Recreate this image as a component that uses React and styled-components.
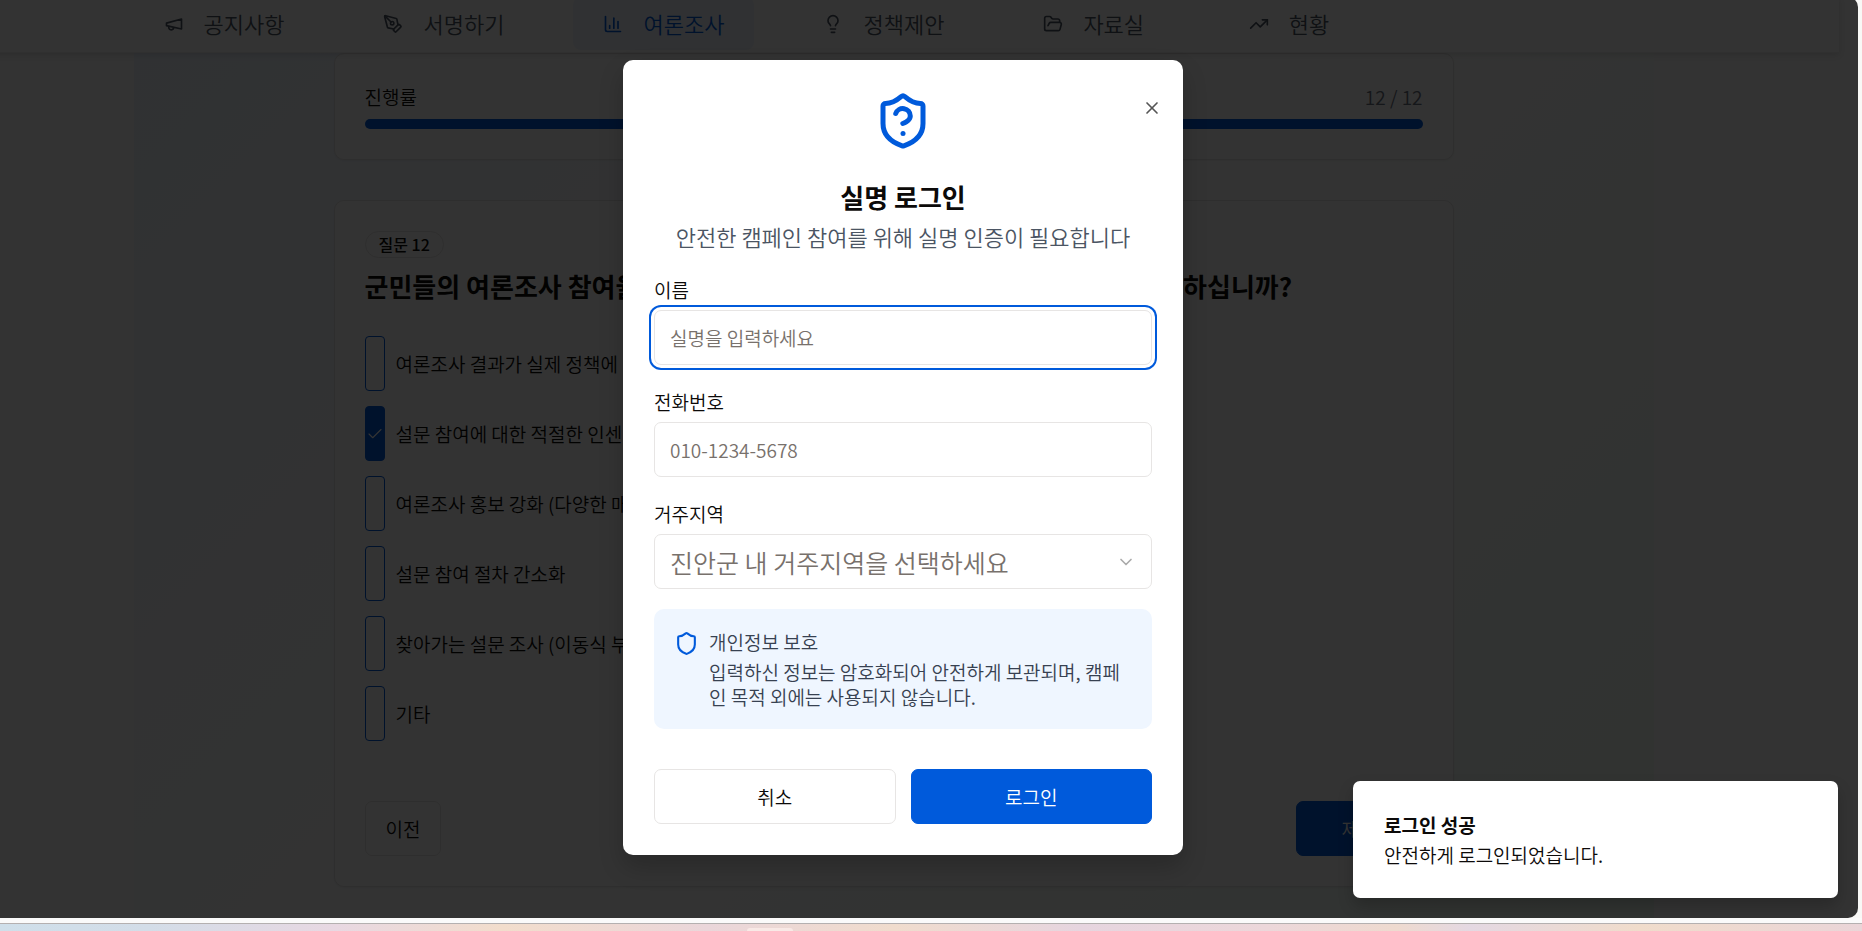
import React from "react";
import styled, { createGlobalStyle, css } from "styled-components";
import {
  PenTool, ChartColumn, Lightbulb, FolderOpen, TrendingUp,
  Check, ChevronDown, Shield, X,
} from "lucide-react";

const blue = "#005adb";
const line = "#e7e5e4";
const ink = "#0c0a09";

const Global = createGlobalStyle`
  *, *::before, *::after { box-sizing: border-box; }
  body { margin: 0; overflow: hidden; background: #fff; }
  body, button, input, select {
    font-family: "Noto Sans CJK KR", "Noto Sans", sans-serif;
    font-size: 19px;
    font-weight: 350;
    line-height: 25px;
    color: ${ink};
  }
  h1, h2, h3, p { margin: 0; }
`;

const Desktop = styled.div`
  min-height: 100vh;
  display: flex;
  flex-direction: column;
  overflow: hidden;
  background: #f8f8f6;
`;

/* The browser window reaches past the left and top edges of the view. */
const Window = styled.div`
  position: relative;
  flex: 1;
  display: flex;
  flex-direction: column;
  margin: -3px 4px 0 -52px;
  padding-right: 19px;
  overflow: hidden;
  border-radius: 10px;
  background: #fcfcfc;
`;

const Taskbar = styled.div`
  height: 13px;
  display: flex;
  justify-content: center;
  align-items: flex-end;
  padding-right: 322px;
  border-top: 5px solid #fafafa;
  background: linear-gradient(90deg, #cfdfea, #d3dde8 8%, #e8d8e2 18%, #f2ddcc 27%, #ead6da 38%, #f0dccd 48%, #e6d5df 58%, #ecd7da 68%, #eedacf 75%, #e4d8e2 79%, #f0dccb 88%, #ead5d8);
  box-shadow: inset 0 1px #b4b0b0;
`;

const TaskbarTab = styled.div`
  width: 46px;
  height: 3px;
  border-radius: 4px 4px 0 0;
  background: #f8e9e6;
`;

const Header = styled.header`
  position: relative;
  background: #fff;
  border-bottom: 1px solid #f0f0f0;
  box-shadow: 0 2px 6px rgba(0, 0, 0, 0.12);
`;

const Nav = styled.nav`
  width: 100%;
  max-width: 1520px;
  margin: 0 auto;
  padding: 0 0 2px;
  display: flex;
  gap: 39px;
`;

const NavItem = styled.a`
  height: 53px;
  min-width: 152px;
  padding: 0 30px;
  display: flex;
  align-items: center;
  justify-content: center;
  gap: 20px;
  border-radius: 8px;
  font-size: 22px;
  text-decoration: none;
  white-space: nowrap;
  color: ${(p) => (p.$active ? blue : "#4b5563")};
  background: ${(p) => (p.$active ? "#eff6ff" : "transparent")};
`;

const Main = styled.main`
  flex: 1;
  width: 100%;
  max-width: 1520px;
  margin: 0 auto;
  padding: 0 200px 31px;
  display: flex;
  flex-direction: column;
  gap: 40px;
  background: linear-gradient(135deg, #eff6ff 0%, #fff 50%, #f0fdf4 100%);
`;

const Card = styled.section`
  padding: 30px;
  border: 1px solid ${line};
  border-radius: 10px;
  background: #fff;
  box-shadow: 0 1px 2px rgba(0, 0, 0, 0.05);
`;

const ProgressHead = styled.div`
  display: flex;
  justify-content: space-between;
  margin-bottom: 10px;
`;

const Muted = styled.span`
  color: #6b7280;
`;

const Track = styled.div`
  height: 10px;
  border-radius: 5px;
  background: ${blue};
`;

const Badge = styled.div`
  width: fit-content;
  padding: 0 13px;
  border: 1px solid ${line};
  border-radius: 14px;
  font-size: 16px;
  font-weight: 500;
`;

const Question = styled.h1`
  margin: 10px 0 32px;
  font-size: 26px;
  font-weight: 700;
  line-height: 36px;
  white-space: nowrap;
`;

const Options = styled.div`
  display: flex;
  flex-direction: column;
  gap: 15px;
  margin-bottom: 60px;
`;

const Option = styled.label`
  display: flex;
  align-items: center;
  gap: 11px;
`;

const Tick = styled.span`
  display: grid;
  place-items: center;
  color: #fff;
  > * { grid-area: 1 / 1; }
`;

const TickInput = styled.input`
  appearance: none;
  width: 20px;
  height: 55px;
  margin: 0;
  border: 1px solid ${blue};
  border-radius: 4px;
  &:checked { background: ${blue}; }
`;

const Row = styled.div`
  display: flex;
  justify-content: space-between;
  gap: 15px;
`;

const Button = styled.button`
  height: 55px;
  padding: 0 ${(p) => (p.$wide ? 45 : 20)}px;
  border: 1px solid ${(p) => (p.$primary ? blue : line)};
  border-radius: 7px;
  color: ${(p) => (p.$primary ? "#fff" : ink)};
  background: ${(p) => (p.$primary ? blue : "#fff")};
  ${(p) => p.$grow && css`flex: 1;`}
`;

const Overlay = styled.div`
  position: absolute;
  inset: 0;
  display: flex;
  align-items: center;
  justify-content: center;
  background: rgba(0, 0, 0, 0.8);
`;

const Dialog = styled.form`
  position: relative;
  width: 560px;
  padding: 31px;
  display: flex;
  flex-direction: column;
  border-radius: 10px;
  background: #fff;
  box-shadow: 0 12px 24px rgba(0, 0, 0, 0.2);
`;

const Close = styled.button`
  position: absolute;
  top: 38px;
  right: 21px;
  display: flex;
  padding: 0;
  border: 0;
  background: none;
  color: #555;
`;

const DialogHead = styled.div`
  display: flex;
  flex-direction: column;
  align-items: center;
  margin-bottom: 25px;
  text-align: center;
`;

const Title = styled.h2`
  margin: 28px 0 5px;
  font-size: 26px;
  font-weight: 700;
  line-height: 36px;
`;

const Subtitle = styled.p`
  font-size: 22px;
  line-height: 32px;
  color: #4b5563;
  white-space: nowrap;
`;

const Field = styled.div`
  display: flex;
  flex-direction: column;
  gap: 8px;
  margin-bottom: ${(p) => (p.$last ? 20 : 24)}px;
`;

const control = css`
  width: 100%;
  height: 55px;
  padding: 0 15px;
  border: 1px solid ${line};
  border-radius: 7px;
  outline: none;
  background: #fff;
`;

const Input = styled.input`
  ${control}
  ${(p) => p.$focused && css`box-shadow: 0 0 0 3px #fff, 0 0 0 5px ${blue};`}
  &::placeholder { color: #78716c; opacity: 1; }
`;

const SelectBox = styled.div`
  display: grid;
  align-items: center;
  > * { grid-area: 1 / 1; }
  > svg {
    justify-self: end;
    margin-right: 16px;
    color: #aaa;
    pointer-events: none;
  }
`;

const Select = styled.select`
  ${control}
  appearance: none;
  font-size: 25px;
  line-height: 36px;
  color: #78716c;
`;

const Notice = styled.div`
  display: flex;
  gap: 10px;
  padding: 20px;
  margin-bottom: 40px;
  border-radius: 10px;
  background: #eff6ff;
  color: #374151;
  > svg { flex: none; margin-top: 2px; color: ${blue}; }
`;

const NoticeTitle = styled.h3`
  margin-bottom: 5px;
  font-size: 19px;
  font-weight: 350;
`;

const Toast = styled.div`
  position: absolute;
  right: 20px;
  bottom: 20px;
  width: 485px;
  padding: 31px;
  display: flex;
  flex-direction: column;
  gap: 5px;
  border-radius: 7px;
  background: #fff;
  box-shadow: 0 8px 16px rgba(0, 0, 0, 0.2);
`;

const ToastTitle = styled.strong`
  font-weight: 700;
`;

const ShieldQuestion = () => (
  <svg width="60" height="60" viewBox="0 0 24 24" fill="none" stroke={blue} strokeWidth="2" strokeLinecap="round" strokeLinejoin="round">
    <path d="M20 13c0 5-3.5 7.5-7.66 8.95a1 1 0 0 1-.67-.01C7.5 20.5 4 18 4 13V6a1 1 0 0 1 1-1c2 0 4.5-1.2 6.24-2.72a1.17 1.17 0 0 1 1.52 0C14.51 3.81 17 5 19 5a1 1 0 0 1 1 1z" />
    <path d="M9.1 9a3 3 0 0 1 5.82 1c0 2-3 3-3 3" />
    <path d="M12 17h.01" />
  </svg>
);

const MegaphoneOutline = () => (
  <svg width="20" height="20" viewBox="0 0 24 24" fill="none" stroke="currentColor" strokeWidth="2" strokeLinecap="round" strokeLinejoin="round">
    <path d="m3 11 18-5v12L3 14v-3z" />
    <path d="M11.6 16.8a3 3 0 1 1-5.8-1.6" />
  </svg>
);

const navItems = [
  ["공지사항", MegaphoneOutline],
  ["서명하기", PenTool],
  ["여론조사", ChartColumn],
  ["정책제안", Lightbulb],
  ["자료실", FolderOpen],
  ["현황", TrendingUp],
];

const options = [
  "여론조사 결과가 실제 정책에 반영",
  "설문 참여에 대한 적절한 인센티브",
  "여론조사 홍보 강화 (다양한 매체)",
  "설문 참여 절차 간소화",
  "찾아가는 설문 조사 (이동식 부스)",
  "기타",
];

export default function App() {
  return (
    <Desktop>
      <Global />
      <Window>
        <Header>
          <Nav>
            {navItems.map(([name, Icon]) => (
              <NavItem key={name} href="#" $active={name === "여론조사"}>
                <Icon size={20} />
                {name}
              </NavItem>
            ))}
          </Nav>
        </Header>
        <Main>
          <Card>
            <ProgressHead>
              <span>진행률</span>
              <Muted>12 / 12</Muted>
            </ProgressHead>
            <Track />
          </Card>
          <Card>
            <Badge>질문 12</Badge>
            <Question>군민들의 여론조사 참여율을 높이기 위해서 가장 필요한 것은 무엇이라고 생각하십니까?</Question>
            <Options>
              {options.map((text, i) => (
                <Option key={text}>
                  <Tick>
                    <TickInput type="checkbox" defaultChecked={i === 1} />
                    {i === 1 && <Check size={18} strokeWidth={1.5} />}
                  </Tick>
                  {text}
                </Option>
              ))}
            </Options>
            <Row>
              <Button type="button">이전</Button>
              <Button type="button" $primary $wide>제출</Button>
            </Row>
          </Card>
        </Main>
        <Overlay>
          <Dialog role="dialog" aria-labelledby="login-title">
            <Close type="button" aria-label="닫기"><X size={20} strokeWidth={2} /></Close>
            <DialogHead>
              <ShieldQuestion />
              <Title id="login-title">실명 로그인</Title>
              <Subtitle>안전한 캠페인 참여를 위해 실명 인증이 필요합니다</Subtitle>
            </DialogHead>
            <Field>
              <label htmlFor="name">이름</label>
              <Input id="name" type="text" placeholder="실명을 입력하세요" $focused />
            </Field>
            <Field>
              <label htmlFor="phone">전화번호</label>
              <Input id="phone" type="tel" placeholder="010-1234-5678" />
            </Field>
            <Field $last>
              <label htmlFor="region">거주지역</label>
              <SelectBox>
                <Select id="region" defaultValue="">
                  <option value="">진안군 내 거주지역을 선택하세요</option>
                </Select>
                <ChevronDown size={20} strokeWidth={2} />
              </SelectBox>
            </Field>
            <Notice>
              <Shield size={25} />
              <div>
                <NoticeTitle>개인정보 보호</NoticeTitle>
                <p>입력하신 정보는 암호화되어 안전하게 보관되며, 캠페인 목적 외에는 사용되지 않습니다.</p>
              </div>
            </Notice>
            <Row>
              <Button type="button" $grow>취소</Button>
              <Button type="submit" $primary $grow>로그인</Button>
            </Row>
          </Dialog>
        </Overlay>
        <Toast role="status">
          <ToastTitle>로그인 성공</ToastTitle>
          <span>안전하게 로그인되었습니다.</span>
        </Toast>
      </Window>
      <Taskbar><TaskbarTab /></Taskbar>
    </Desktop>
  );
}
